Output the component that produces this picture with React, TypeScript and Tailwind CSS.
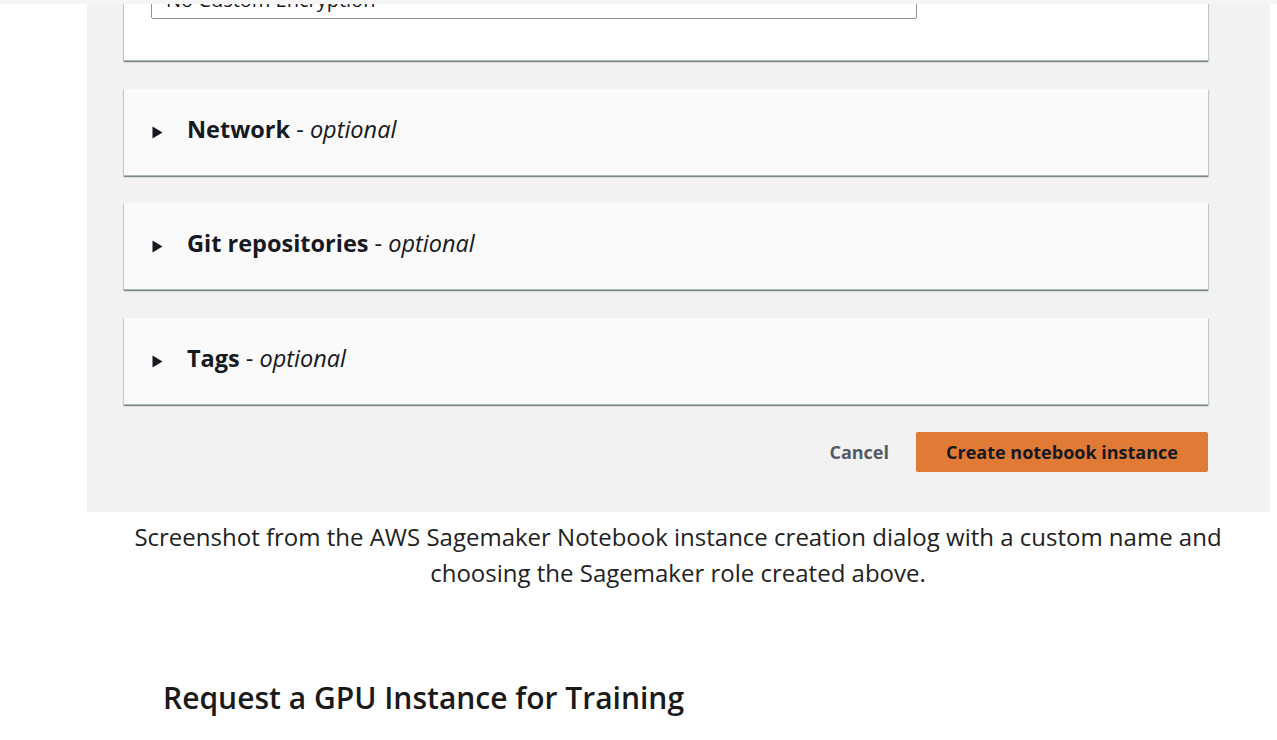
import React from "react";

function Caret() {
  return (
    <svg width="11" height="13" viewBox="0 0 11 13" className="shrink-0">
      <path d="M0.5 0.5 L10.5 6.5 L0.5 12.5 Z" fill="#16191f" />
    </svg>
  );
}

function Section({ title, className = "" }: { title: string; className?: string }) {
  return (
    <div className={"bg-[#fafafa] h-[87px] border-b border-[#aab7b8] shadow-[0_1px_1px_0_rgba(0,28,36,0.3),1px_1px_1px_0_rgba(0,28,36,0.15),-1px_1px_1px_0_rgba(0,28,36,0.15)] flex items-center pl-[28px] " + className}>
      <Caret />
      <div className="ml-[24px] text-[23.5px] text-[#16191f] leading-none mb-[5px]">
        <span className="font-bold">{title}</span>
        <span> - </span>
        <span className="italic">optional</span>
      </div>
    </div>
  );
}

export default function App() {
  return (
    <div className="w-[1277px] h-[740px] bg-white overflow-hidden" style={{ fontFamily: '"Open Sans", "Noto Sans", sans-serif' }}>
      <div className="h-[4px] bg-[#f5f5f5]" />
      <div className="ml-[87px] w-[1183px] h-[508px] bg-[#f2f2f2] overflow-hidden flex flex-col pl-[37px] pr-[62px]">
        <div className="-mt-[42px] bg-white h-[99px] border-b border-[#aab7b8] shadow-[0_1px_1px_0_rgba(0,28,36,0.3),1px_1px_1px_0_rgba(0,28,36,0.15),-1px_1px_1px_0_rgba(0,28,36,0.15)] pl-[27px] pt-[20px]">
          <div className="w-[766px] h-[37px] border border-[#879596] rounded-[2px] flex items-center justify-between pl-[14px] pr-[22px] bg-white">
            <span className="text-[20px] leading-none -mt-[2px] text-[#16191f]">No Custom Encryption</span>
            <span className="w-[6px] h-[2px] bg-[#879596]" />
          </div>
        </div>
        <div className="mt-[28px] flex flex-col">
          <Section title="Network" />
          <Section title="Git repositories" className="mt-[27px]" />
          <Section title="Tags" className="mt-[28px]" />
        </div>
        <div className="mt-[27px] flex items-center justify-end">
          <span className="text-[18px] font-bold text-[#545b64] mr-[27px]">Cancel</span>
          <div className="w-[292px] h-[40px] bg-[#e07a35] rounded-[2px] flex items-center justify-center">
            <span className="text-[18px] font-bold text-[#16191f]">Create notebook instance</span>
          </div>
        </div>
      </div>
      <div className="w-[1130px] mt-[7px] text-center text-[24px] leading-[36px] text-[#222]" style={{ marginLeft: 113 }}>
        Screenshot from the AWS Sagemaker Notebook instance creation dialog with a custom name and choosing the Sagemaker role created above.
      </div>
      <h2 className="ml-[163px] mt-[89px] text-[30px] leading-[36px] font-semibold text-[#1a1a1a]">
        Request a GPU Instance for Training
      </h2>
    </div>
  );
}
